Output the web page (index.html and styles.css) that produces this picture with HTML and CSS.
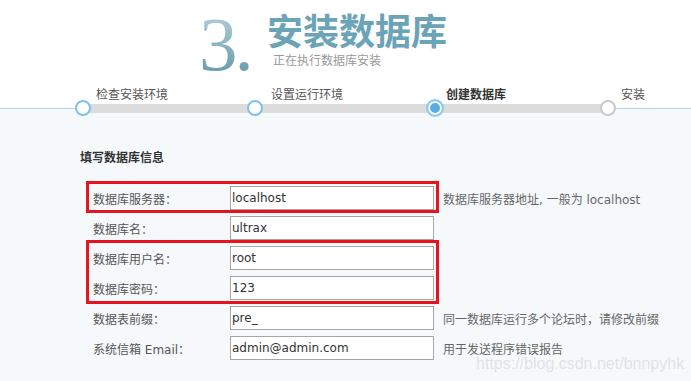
FILE: index.html
```html
<!DOCTYPE html>
<html lang="zh-CN">
<head>
    <meta charset="UTF-8">
    <title>安装数据库</title>
    <link rel="stylesheet" href="styles.css">
</head>
<body>
<div class="header">
    <div class="brand">
        <span class="num">3.</span>
        <div class="brand-text">
            <h1>安装数据库</h1>
            <p>正在执行数据库安装</p>
        </div>
    </div>
    <ul class="step-labels">
        <li>检查安装环境</li>
        <li>设置运行环境</li>
        <li class="current">创建数据库</li>
        <li>安装</li>
    </ul>
</div>
<div class="track">
    <span class="dot"></span>
    <span class="dot"></span>
    <span class="dot current"></span>
    <span class="dot todo"></span>
</div>

<div class="main">
    <h2>填写数据库信息</h2>
    <div class="form">
        <div class="row">
            <label>数据库服务器：</label>
            <input type="text" value="localhost">
            <span class="tip">数据库服务器地址, 一般为 localhost</span>
        </div>
        <div class="row">
            <label>数据库名：</label>
            <input type="text" value="ultrax">
        </div>
        <div class="row">
            <label>数据库用户名：</label>
            <input type="text" value="root">
        </div>
        <div class="row">
            <label>数据库密码：</label>
            <input type="text" value="123">
        </div>
        <div class="row">
            <label>数据表前缀：</label>
            <input type="text" value="pre_">
            <span class="tip">同一数据库运行多个论坛时，请修改前缀</span>
        </div>
        <div class="row">
            <label>系统信箱 Email：</label>
            <input type="text" value="admin@admin.com">
            <span class="tip">用于发送程序错误报告</span>
        </div>
        <!-- highlight boxes -->
        <div class="mark mark-server"></div>
        <div class="mark mark-user"></div>
    </div>
</div>

<div class="watermark">https://blog.csdn.net/bnnpyhk</div>
</body>
</html>
```

FILE: styles.css
```css
body {
    margin: 0;
    background-color: #f5f9fc;
    font-family: "DejaVu Sans", "Noto Sans CJK SC", sans-serif;
    font-size: 12px;
    color: #555;
}

.header {
    height: 108px;
    background-color: #fff;
    border-bottom: 1px solid #b4d6e5;
}

.brand {
    display: flex;
    height: 87px;
    padding-left: 199px;
    box-sizing: border-box;
}

.num {
    width: 68px;
    flex: none;
    margin-top: 6px;
    font-family: "Liberation Serif", serif;
    font-size: 77px;
    line-height: 76px;
    letter-spacing: -3px;
    background: linear-gradient(#b7d5e0, #5a8fa3);
    -webkit-background-clip: text;
    background-clip: text;
    color: transparent;
}

.brand-text h1 {
    margin: 15px 0 0;
    font-size: 36px;
    line-height: 36px;
    font-weight: bold;
    color: #6ba3b7;
}

.brand-text p {
    margin: 3px 0 0 6px;
    font-size: 12px;
    line-height: 14px;
    color: #999;
}

.step-labels {
    display: flex;
    margin: 0;
    padding: 0 0 0 96px;
    list-style: none;
    line-height: 16px;
}

.step-labels li {
    flex: none;
    width: 175px;
}

.step-labels li:last-child {
    width: auto;
}

.step-labels .current {
    font-weight: bold;
    color: #333;
}

.track {
    display: flex;
    justify-content: space-between;
    align-items: center;
    width: 541px;
    height: 18px;
    margin: -10px 0 0 75px;
    background: linear-gradient(#dcdcdc, #dcdcdc) no-repeat center / calc(100% - 16px) 9px;
}

.dot {
    width: 16px;
    height: 16px;
    box-sizing: border-box;
    border: 2px solid #7cc3ea;
    border-radius: 50%;
    background-color: #fff;
}

.dot.current {
    width: 18px;
    height: 18px;
    margin-left: 6px;
    border-color: #8ccbee;
    background-color: #58ade6;
    box-shadow: inset 0 0 0 2px #fff;
}

.dot.todo {
    border-color: #c9c9c9;
}

.main {
    padding: 33px 0 0 80px;
}

.main h2 {
    margin: 0;
    font-size: 12px;
    line-height: 16px;
    font-weight: bold;
    color: #333;
}

.form {
    position: relative;
    margin-top: 20px;
}

.row {
    display: flex;
    align-items: center;
    height: 24px;
    margin-bottom: 6px;
}

.row label {
    flex: none;
    width: 150px;
    padding-left: 13px;
    box-sizing: border-box;
}

.row input {
    flex: none;
    width: 204px;
    height: 24px;
    box-sizing: border-box;
    margin: 0;
    padding: 0 1px;
    border: 1px solid #a6a6a6;
    background-color: #fff;
    font-family: "DejaVu Sans", sans-serif;
    font-size: 12px;
    color: #333;
    outline: none;
}

.tip {
    margin-left: 9px;
    white-space: nowrap;
    color: #666;
}

.mark {
    position: absolute;
    left: 6px;
    width: 353px;
    box-sizing: border-box;
    border: 3px solid #e6141d;
}

.mark-server {
    top: -5px;
    height: 32px;
}

.mark-user {
    top: 54px;
    height: 64px;
}

.watermark {
    position: absolute;
    left: 476px;
    top: 355px;
    font-family: "Liberation Sans", sans-serif;
    font-size: 16px;
    line-height: 18px;
    color: #dde2e6;
    text-shadow: 0 0 1px #fff;
}
```
